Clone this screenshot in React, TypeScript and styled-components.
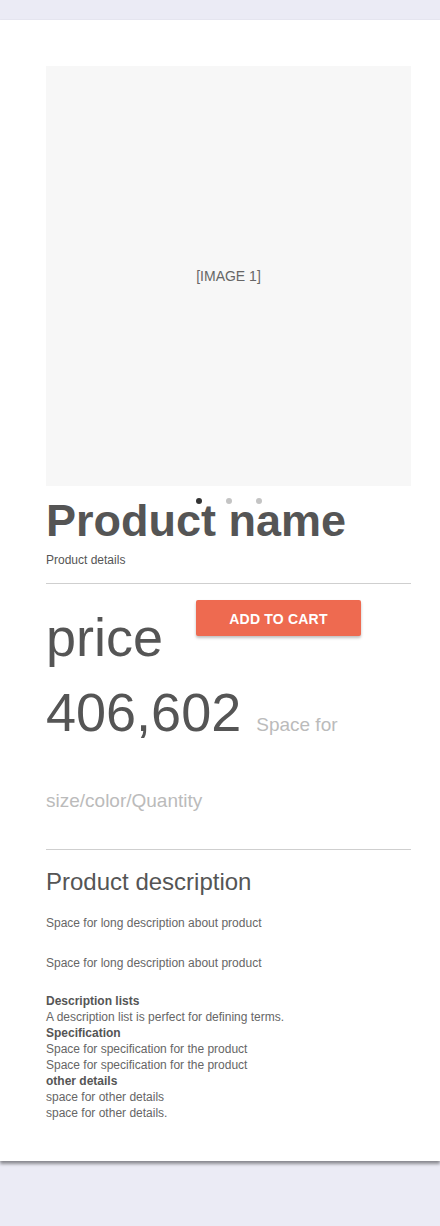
import React from "react";
import styled, { createGlobalStyle } from "styled-components";

const GlobalStyle = createGlobalStyle`
  html, body {
    margin: 0;
    padding: 0;
    background: #ebebf5;
    font-family: "Liberation Sans", Arial, sans-serif;
  }
`;

const Page = styled.div`
  padding: 20px 0 65px;
`;

const Card = styled.main`
  background: #fff;
  padding: 46px 29px 40px 46px;
  box-shadow: 0 3px 3px rgba(0, 0, 0, 0.4), 0 0 1px rgba(0, 0, 0, 0.12);
  color: #555;
`;

const Carousel = styled.div`
  position: relative;
`;

const ImageBox = styled.div`
  height: 420px;
  background: #f7f7f7;
  display: flex;
  align-items: center;
  justify-content: center;
  font-size: 14px;
  color: #666;
`;

const Dots = styled.div`
  position: absolute;
  left: 0;
  right: 0;
  top: 432px;
  display: flex;
  justify-content: center;
  gap: 24px;
  z-index: 2;
`;

const Dot = styled.span<{ $active?: boolean }>`
  width: 6px;
  height: 6px;
  border-radius: 50%;
  background: ${(p) => (p.$active ? "#333" : "#c4c4c4")};
`;

const Title = styled.h1`
  margin: 9px 0 0;
  font-size: 45px;
  line-height: 1.15;
  font-weight: 700;
  color: #555;
`;

const Details = styled.p`
  margin: 7px 0 0;
  font-size: 12px;
  line-height: 1.15;
  color: #555;
`;

const Divider = styled.hr<{ $top: number }>`
  border: 0;
  border-top: 1px solid #cfcfcf;
  margin: ${(p) => p.$top}px 0 0;
  height: 0;
`;

const PriceBlock = styled.div`
  margin-top: 16px;
  font-size: 54px;
  line-height: 1.4;
  color: #555;
  &::after {
    content: "";
    display: block;
    clear: both;
  }
`;

const CartButton = styled.button`
  float: right;
  margin: 0 50px 0 0;
  width: 165px;
  height: 36px;
  border: 0;
  border-radius: 2px;
  background: #ee6a50;
  color: #fff;
  font-family: "Liberation Sans", Arial, sans-serif;
  font-weight: 700;
  font-size: 14px;
  line-height: 36px;
  letter-spacing: 0.2px;
  box-shadow: 0 2px 3px rgba(0, 0, 0, 0.25);
  cursor: pointer;
`;

const Muted = styled.span`
  font-size: 19px;
  color: #bbb;
`;

const SectionTitle = styled.h2`
  margin: 18px 0 0;
  font-size: 24px;
  line-height: 1.15;
  font-weight: 400;
  color: #555;
`;

const Text = styled.p`
  margin: 21px 0 0;
  font-size: 12px;
  line-height: 1.15;
  color: #666;
  & + & {
    margin-top: 26px;
  }
`;

const List = styled.dl`
  margin: 22px 0 0;
  font-size: 12px;
  line-height: 16px;
  color: #666;
`;

const Term = styled.dt`
  font-weight: 700;
  color: #555;
`;

const Desc = styled.dd`
  margin: 0;
`;

export default function App() {
  return (
    <>
      <GlobalStyle />
      <Page>
        <Card>
          <Carousel>
            <ImageBox>[IMAGE 1]</ImageBox>
            <Dots>
              <Dot $active />
              <Dot />
              <Dot />
            </Dots>
          </Carousel>
          <Title>Product name</Title>
          <Details>Product details</Details>
          <Divider $top={15} />
          <PriceBlock>
            <CartButton>ADD TO CART</CartButton>
            price 406,602 <Muted>Space for size/color/Quantity</Muted>
          </PriceBlock>
          <Divider $top={23} />
          <SectionTitle>Product description</SectionTitle>
          <Text>Space for long description about product</Text>
          <Text>Space for long description about product</Text>
          <List>
            <Term>Description lists</Term>
            <Desc>A description list is perfect for defining terms.</Desc>
            <Term>Specification</Term>
            <Desc>Space for specification for the product</Desc>
            <Desc>Space for specification for the product</Desc>
            <Term>other details</Term>
            <Desc>space for other details</Desc>
            <Desc>space for other details.</Desc>
          </List>
        </Card>
      </Page>
    </>
  );
}
